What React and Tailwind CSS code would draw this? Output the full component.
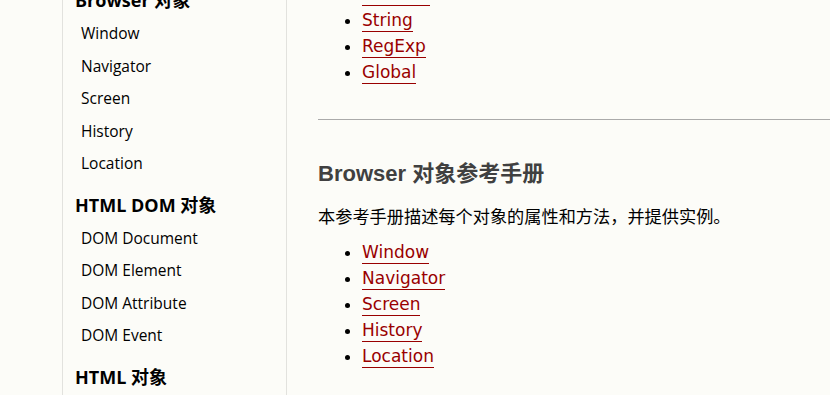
import React from "react";

const browserItems = ["Window", "Navigator", "Screen", "History", "Location"];
const domItems = ["DOM Document", "DOM Element", "DOM Attribute", "DOM Event"];

function SideItem({ children }) {
  return (
    <div className="h-[32.5px] flex items-center pl-[18px] text-[15.5px] text-black">
      {children}
    </div>
  );
}

function SideHeading({ children, className = "" }) {
  return (
    <div className={"h-[34px] flex items-center pl-[12px] text-[18px] font-bold text-black " + className}>
      {children}
    </div>
  );
}

function LinkItem({ children }) {
  return (
    <li className="h-[26px] leading-[26px]">
      <a className="text-[#900] border-b border-[#900] pb-[1px] cursor-pointer">{children}</a>
    </li>
  );
}

export default function App() {
  return (
    <div className="w-[830px] h-[395px] overflow-hidden bg-[#fcfcf8] flex">
      <div className="w-[62px] shrink-0" />
      <aside
        className="w-[225px] shrink-0 h-full border-l border-r border-[#e2e2de] bg-[#fcfcf8] overflow-hidden"
        style={{ fontFamily: '"Open Sans", "Noto Sans", "Noto Sans CJK SC", sans-serif' }}
      >
        <div className="-mt-[16.5px]">
          <SideHeading>Browser 对象</SideHeading>
          {browserItems.map((t) => (
            <SideItem key={t}>{t}</SideItem>
          ))}
          <SideHeading className="mt-[8px]">HTML DOM 对象</SideHeading>
          {domItems.map((t) => (
            <SideItem key={t}>{t}</SideItem>
          ))}
          <SideHeading className="mt-[8px]">HTML 对象</SideHeading>
        </div>
      </aside>
      <main
        className="flex-1 pl-[31px] overflow-hidden"
        style={{ fontFamily: '"DejaVu Sans", "Noto Sans CJK SC", sans-serif' }}
      >
        <ul className="list-disc pl-[44px] text-[17px] -mt-[19px]">
          <LinkItem>Number</LinkItem>
          <LinkItem>String</LinkItem>
          <LinkItem>RegExp</LinkItem>
          <LinkItem>Global</LinkItem>
        </ul>
        <div className="mt-[34px] border-t border-[#aaa]" />
        <h2 className="mt-[37px] text-[22px] font-bold text-[#404040] leading-[28px] h-[28px]">
          <span style={{ fontFamily: '"Liberation Sans", "Noto Sans CJK SC", sans-serif' }}>Browser </span>
          <span style={{ fontFamily: '"Noto Sans CJK SC", sans-serif' }}>对象参考手册</span>
        </h2>
        <p
          className="mt-[18px] text-[17.2px] leading-[26px] text-black"
          style={{ fontFamily: '"Noto Sans CJK SC", sans-serif' }}
        >
          本参考手册描述每个对象的属性和方法，并提供实例。
        </p>
        <ul className="list-disc pl-[44px] text-[17px] mt-[10px]">
          <LinkItem>Window</LinkItem>
          <LinkItem>Navigator</LinkItem>
          <LinkItem>Screen</LinkItem>
          <LinkItem>History</LinkItem>
          <LinkItem>Location</LinkItem>
        </ul>
      </main>
    </div>
  );
}
